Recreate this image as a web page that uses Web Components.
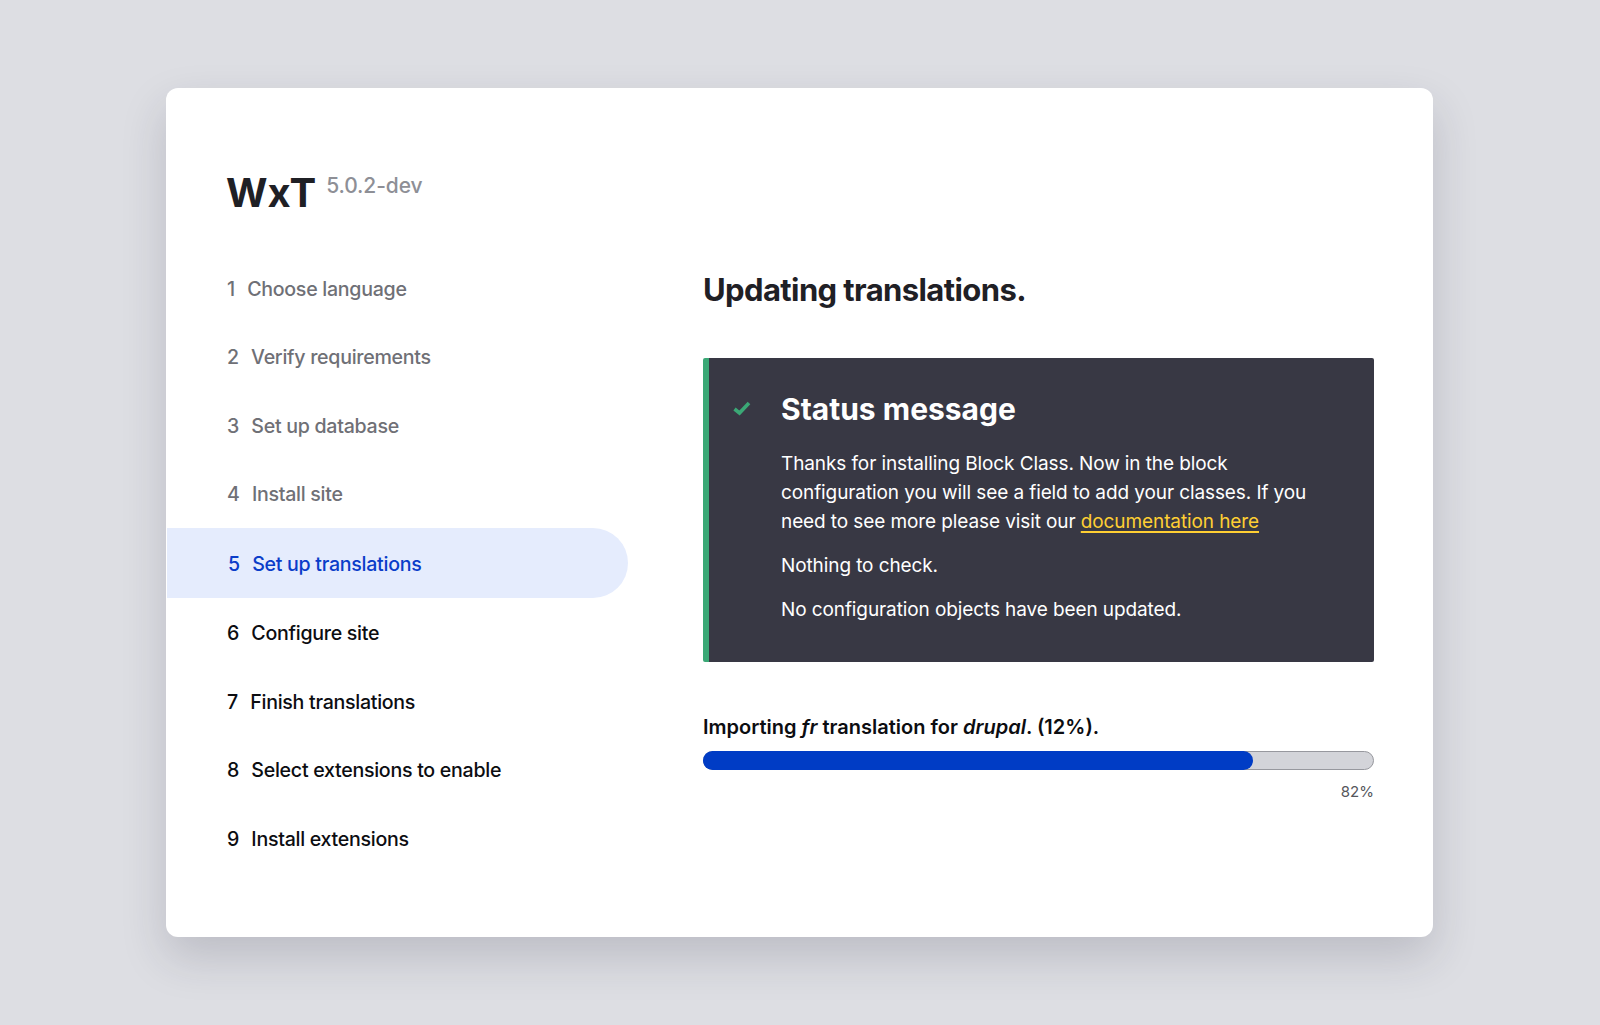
<!DOCTYPE html>
<html>
<head>
<meta charset="utf-8">
<title>WxT install</title>
<style>
	html, body
	{
		margin: 0;
		height: 100%;
	}

	body
	{
		background: #dddee3;
		font-family: Inter, "Liberation Sans", sans-serif;
		overflow: hidden;
	}

	status-message p
	{
		margin: 0 0 14.6px 0;
		font-size: 19px;
		line-height: 29.2px;
		letter-spacing: -0.1px;
	}

	status-message a
	{
		color: #ffcf33;
		text-decoration-thickness: 2px;
		text-underline-offset: 3px;
	}
</style>
</head>
<body>
<install-page>
	<install-brand slot="brand" version="5.0.2-dev">WxT</install-brand>
	<install-step slot="steps" number="1" state="done">Choose language</install-step>
	<install-step slot="steps" number="2" state="done">Verify requirements</install-step>
	<install-step slot="steps" number="3" state="done">Set up database</install-step>
	<install-step slot="steps" number="4" state="done">Install site</install-step>
	<install-step slot="steps" number="5" state="active">Set up translations</install-step>
	<install-step slot="steps" number="6">Configure site</install-step>
	<install-step slot="steps" number="7">Finish translations</install-step>
	<install-step slot="steps" number="8">Select extensions to enable</install-step>
	<install-step slot="steps" number="9">Install extensions</install-step>

	<h1 slot="title" style="margin:0;font-size:31px;line-height:40px;font-weight:700;color:#1f2025;letter-spacing:-0.6px">Updating translations.</h1>

	<status-message slot="content" heading="Status message">
		<p>Thanks for installing Block Class. Now in the block configuration you will see a field to add your classes. If you need to see more please visit our <a href="#">documentation here</a></p>
		<p>Nothing to check.</p>
		<p>No configuration objects have been updated.</p>
	</status-message>

	<progress-bar slot="content" percent="82">Importing <em>fr</em> translation for <em>drupal</em>. (12%).</progress-bar>
</install-page>

<script>
const page_template = document.createElement("template");
page_template.innerHTML = `
	<style>
		:host
		{
			display: flex;
			height: 100%;
			align-items: center;
			padding-left: 166px;
		}

		.card
		{
			box-sizing: border-box;
			width: 1267px;
			height: 849px;
			padding: 80px 0 0 0;
			background: #fff;
			border-radius: 12px;
			box-shadow: 0 20px 45px rgba(40, 40, 60, 0.18);
		}

		.columns
		{
			display: grid;
			grid-template-columns: 462px 1fr;
			column-gap: 75px;
			padding-right: 59px;
			margin-top: 14.4px;
		}

		.brand
		{
			padding-left: 60px;
		}

		.steps
		{
			display: flex;
			flex-direction: column;
			padding-left: 1px;
		}

		.title
		{
			height: 46px;
			margin-top: 15.6px;
			margin-bottom: 42px;
		}
	</style>

	<div class="card">
		<div class="brand"><slot name="brand"></slot></div>
		<div class="columns">
			<nav class="steps"><slot name="steps"></slot></nav>
			<main>
				<div class="title"><slot name="title"></slot></div>
				<slot name="content"></slot>
			</main>
		</div>
	</div>
`;

class InstallPage extends HTMLElement
{
	constructor()
	{
		super();

		this.attachShadow({ mode: "open" });
		this.shadowRoot.appendChild(page_template.content.cloneNode(true));
	}
}

const brand_template = document.createElement("template");
brand_template.innerHTML = `
	<style>
		:host
		{
			display: flex;
			align-items: flex-start;
			height: 72px;
		}

		.name
		{
			font-size: 40px;
			line-height: 50px;
			font-weight: 700;
			color: #1f2025;
		}

		.version
		{
			margin: 5px 0 0 10px;
			font-size: 21px;
			line-height: 26px;
			font-weight: 500;
			letter-spacing: -0.1px;
			color: #8e8f96;
		}
	</style>

	<div class="name"><slot></slot></div>
	<div class="version"></div>
`;

class InstallBrand extends HTMLElement
{
	constructor()
	{
		super();

		this.attachShadow({ mode: "open" });
		this.shadowRoot.appendChild(brand_template.content.cloneNode(true));
		this.shadowRoot.querySelector(".version").innerText = this.getAttribute("version");
	}
}

const step_template = document.createElement("template");
step_template.innerHTML = `
	<style>
		:host
		{
			display: flex;
			box-sizing: border-box;
			align-items: center;
			height: 68.5px;
			padding-left: 60px;
			font-size: 19.6px;
			font-weight: 450;
			letter-spacing: -0.28px;
			color: #0c0d11;
			border-radius: 0 35px 35px 0;
		}

		:host([state="done"])
		{
			color: #6f7076;
		}

		:host([state="active"])
		{
			height: 70px;
			margin-bottom: 0.4px;
			padding-left: 61px;
			padding-top: 1px;
			color: #0a3dc9;
			background: #e5ecfd;
		}

		.number
		{
			margin-right: 12.3px;
		}
	</style>

	<span class="number"></span><slot></slot>
`;

class InstallStep extends HTMLElement
{
	constructor()
	{
		super();

		this.attachShadow({ mode: "open" });
		this.shadowRoot.appendChild(step_template.content.cloneNode(true));
		this.shadowRoot.querySelector(".number").innerText = this.getAttribute("number");
	}
}

const message_template = document.createElement("template");
message_template.innerHTML = `
	<style>
		:host
		{
			display: block;
			box-sizing: border-box;
			height: 304px;
			background: #383844;
			color: #fff;
			border-left: 6px solid #3ba876;
			border-radius: 2px;
		}

		.inner
		{
			display: grid;
			grid-template-columns: 18px 1fr;
			column-gap: 30px;
			padding: 31px 60px 0 24px;
		}

		svg
		{
			margin-top: 12px;
		}

		h2
		{
			margin: 0 0 20px 0;
			font-size: 30px;
			line-height: 40px;
			font-weight: 700;
		}
	</style>

	<div class="inner">
		<svg width="18" height="15" viewBox="0 0 18 15"><path d="M1.5 8 L6.5 12 L16 2" fill="none" stroke="#3ba876" stroke-width="3.6"/></svg>
		<div>
			<h2></h2>
			<slot></slot>
		</div>
	</div>
`;

class StatusMessage extends HTMLElement
{
	constructor()
	{
		super();

		this.attachShadow({ mode: "open" });
		this.shadowRoot.appendChild(message_template.content.cloneNode(true));
		this.shadowRoot.querySelector("h2").innerText = this.getAttribute("heading");
	}
}

const progress_template = document.createElement("template");
progress_template.innerHTML = `
	<style>
		:host
		{
			display: block;
			margin-top: 50px;
		}

		.label
		{
			font-size: 20px;
			line-height: 30px;
			font-weight: 600;
			color: #0c0d11;
		}

		.track
		{
			box-sizing: border-box;
			height: 19px;
			margin-top: 9px;
			background: #d3d4d9;
			border: 1px solid #97989e;
			border-radius: 10px;
			position: relative;
		}

		.fill
		{
			position: absolute;
			left: -1px;
			top: -1px;
			bottom: -1px;
			background: #003cc5;
			border-radius: 10px;
		}

		.percent
		{
			margin-top: 11px;
			text-align: right;
			font-size: 15px;
			line-height: 22px;
			color: #55565b;
		}
	</style>

	<div class="label"><slot></slot></div>
	<div class="track"><div class="fill"></div></div>
	<div class="percent"></div>
`;

class ProgressBar extends HTMLElement
{
	constructor()
	{
		super();

		const percent = this.getAttribute("percent");

		this.attachShadow({ mode: "open" });
		this.shadowRoot.appendChild(progress_template.content.cloneNode(true));
		this.shadowRoot.querySelector(".fill").style.width = "calc(" + percent + "% + 1px)";
		this.shadowRoot.querySelector(".percent").innerText = percent + "%";
	}
}

window.customElements.define("install-page", InstallPage);
window.customElements.define("install-brand", InstallBrand);
window.customElements.define("install-step", InstallStep);
window.customElements.define("status-message", StatusMessage);
window.customElements.define("progress-bar", ProgressBar);
</script>
</body>
</html>
